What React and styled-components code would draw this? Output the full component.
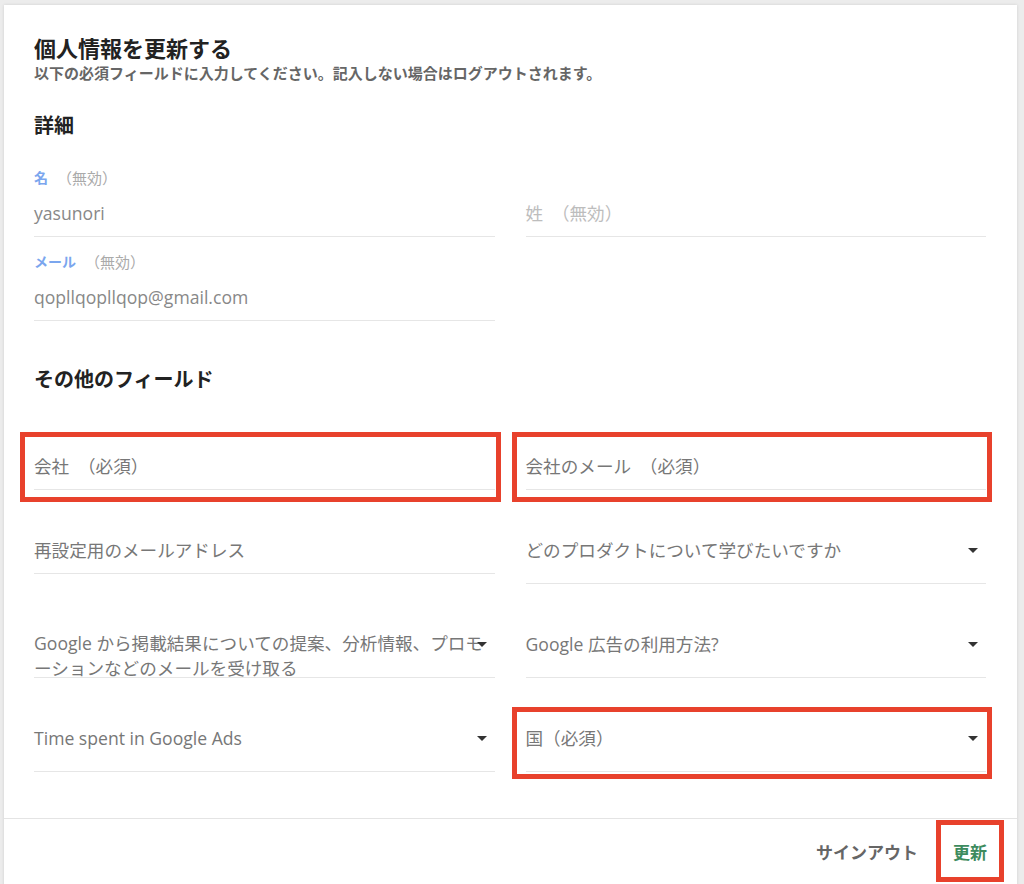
import React from 'react';
import styled, { createGlobalStyle } from 'styled-components';

const GlobalStyle = createGlobalStyle`
  html, body {
    margin: 0;
    padding: 0;
    background: #ececec;
  }
  body {
    font-family: "Open Sans", "Noto Sans CJK JP", sans-serif;
    color: #333;
  }
`;

const Page = styled.div`
  padding: 5px 7px 0 4px;
  height: 884px;
  box-sizing: border-box;
  overflow: hidden;
`;

const Card = styled.div`
  background: #fff;
  box-shadow: 0 0 3px rgba(0, 0, 0, 0.12);
  min-height: 900px;
`;

const Body = styled.div`
  padding: 28px 31px 46px 30px;
`;

const Title = styled.h1`
  margin: 0;
  font-size: 22px;
  line-height: 30px;
  font-weight: 700;
  color: #222;
`;

const Subtitle = styled.p`
  margin: 0;
  font-size: 15px;
  line-height: 20px;
  font-weight: 700;
  color: #666;
`;

const Section = styled.h2`
  margin: ${(p) => p.$top}px 0 0;
  font-size: 20px;
  line-height: 28px;
  font-weight: 700;
  color: #222;
`;

const Grid = styled.div`
  display: grid;
  grid-template-columns: 1fr 1fr;
  column-gap: 31px;
  row-gap: ${(p) => p.$gap}px;
  align-items: ${(p) => p.$align || 'start'};
  margin-top: ${(p) => p.$top}px;
`;

const Field = styled.div`
  position: relative;
  display: flex;
  flex-direction: column;
`;

const Label = styled.div`
  display: flex;
  align-items: center;
  height: 20px;
  font-size: 14px;
  line-height: 20px;
  font-weight: 700;
  color: #7ba6ee;
  margin-bottom: 1px;

  span {
    color: #aaa;
    font-weight: 400;
    font-size: 15px;
    line-height: 20px;
    margin-left: 9px;
  }
`;

const InputBox = styled.div`
  height: ${(p) => (p.$select ? 58 : 48)}px;
  box-sizing: border-box;
  border-bottom: 1px solid #e6e6e6;
  padding-top: ${(p) => (p.$multi ? 11 : 12)}px;
  position: relative;
  font-size: 17.6px;
  line-height: ${(p) => (p.$multi ? 25 : 24)}px;
  color: ${(p) => p.$color || '#777'};
`;

const Text = styled.div`
  white-space: ${(p) => (p.$wrap ? 'normal' : 'nowrap')};
  overflow: visible;
`;

const Arrow = styled.div`
  position: absolute;
  right: 8px;
  top: 22px;
  width: 0;
  height: 0;
  border-left: 5px solid transparent;
  border-right: 5px solid transparent;
  border-top: 5px solid #333;
`;

const Mark = styled.div`
  position: absolute;
  pointer-events: none;
  border: 5px solid #e8412c;
  top: ${(p) => p.$t}px;
  bottom: ${(p) => p.$b}px;
  left: ${(p) => p.$l}px;
  right: ${(p) => p.$r}px;
`;

const Footer = styled.div`
  border-top: 1px solid #e4e4e4;
  display: flex;
  justify-content: flex-end;
  align-items: flex-start;
  gap: 3px;
  padding: 0 13px 0 0;
  height: 66px;
`;

const Button = styled.button`
  position: relative;
  background: none;
  border: none;
  font-family: inherit;
  font-size: 17px;
  font-weight: 700;
  padding: 0 ${(p) => (p.$primary ? 17 : 15)}px;
  height: 62px;
  margin-top: 1px;
  color: ${(p) => (p.$primary ? '#3d8b5e' : '#666')};
  cursor: pointer;
`;

const Input = ({ value, color, select, multi, mark }) => (
  <Field>
    <InputBox $select={select} $multi={multi} $color={color}>
      <Text $wrap={multi}>{value}</Text>
      {select && <Arrow />}
    </InputBox>
    {mark && <Mark $t={mark[0]} $b={mark[1]} $l={-14} $r={-6} />}
  </Field>
);

const Disabled = ({ label, value }) => (
  <Field>
    <Label>
      {label}
      <span>（無効）</span>
    </Label>
    <InputBox $color="#888">
      <Text>{value}</Text>
    </InputBox>
  </Field>
);

export default function App() {
  return (
    <Page>
      <GlobalStyle />
      <Card>
        <Body>
          <Title>個人情報を更新する</Title>
          <Subtitle>以下の必須フィールドに入力してください。記入しない場合はログアウトされます。</Subtitle>

          <Section $top={29}>詳細</Section>
          <Grid $top={28} $gap={15} $align="end">
            <Disabled label="名" value="yasunori" />
            <Input value="姓　（無効）" color="#bdbdbd" />
            <Disabled label="メール" value="qopllqopllqop@gmail.com" />
            <div />
          </Grid>

          <Section $top={45}>その他のフィールド</Section>
          <Grid $top={48} $gap={36}>
            <Input value="会社　（必須）" mark={[-10, -12]} />
            <Input value="会社のメール　（必須）" mark={[-10, -12]} />
            <Input value="再設定用のメールアドレス" />
            <Input value="どのプロダクトについて学びたいですか" select />
            <Input
              value="Google から掲載結果についての提案、分析情報、プロモーションなどのメールを受け取る"
              select
              multi
            />
            <Input value="Google 広告の利用方法?" select />
            <Input value="Time spent in Google Ads" select />
            <Input value="国（必須）" select mark={[-7, -7]} />
          </Grid>
        </Body>
        <Footer>
          <Button>サインアウト</Button>
          <Button $primary>
            更新
            <Mark $t={0} $b={0} $l={0} $r={0} />
          </Button>
        </Footer>
      </Card>
    </Page>
  );
}
